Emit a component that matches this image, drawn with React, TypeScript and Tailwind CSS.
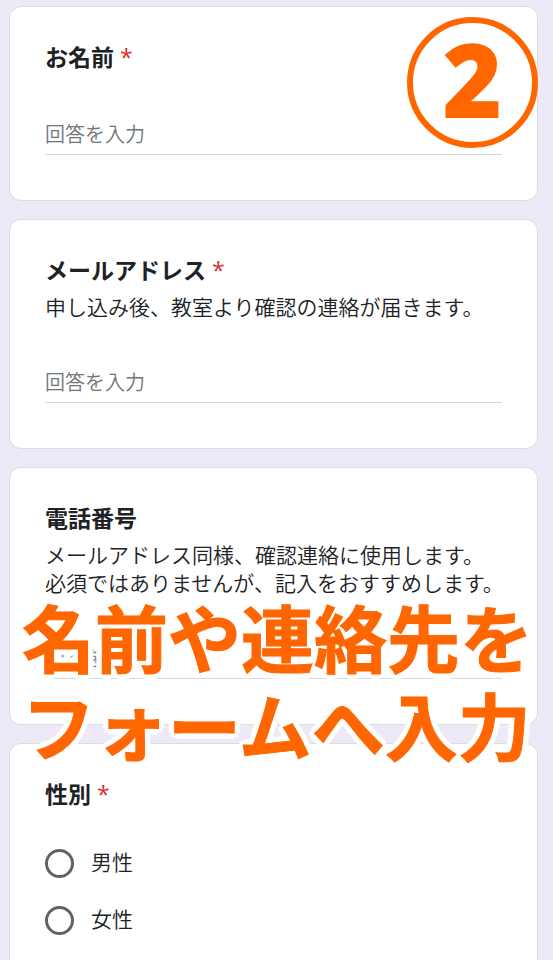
import { useId, useState } from "react";

type TextQuestionProps = {
  title: string;
  required?: boolean;
  description?: string[];
  type?: string;
};

const genders = ["男性", "女性"];

function RequiredMark() {
  return (
    <span className="ml-[6px] font-['Open_Sans',sans-serif] leading-none font-normal text-[#d93025]">*</span>
  );
}

function TextQuestion({ title, required, description, type = "text" }: TextQuestionProps) {
  const id = useId();

  return (
    <section className="rounded-xl border border-[#dadce0] bg-white px-[35px] pt-[35px] pb-[45px]">
      <label htmlFor={id} className="block text-[23px] leading-7 font-bold">
        {title}
        {required && <RequiredMark />}
      </label>
      {description && (
        <p className="mt-[9px] text-[21px] leading-7 font-[350] whitespace-nowrap">
          {description.map((line) => (
            <span key={line} className="block">
              {line}
            </span>
          ))}
        </p>
      )}
      <input
        id={id}
        type={type}
        required={required}
        placeholder="回答を入力"
        className={`block h-10 w-full border-b border-[#d5d7da] bg-transparent pb-[2px] text-[20px] font-[350] outline-none placeholder:text-[#70757a] ${
          description ? "mt-[43px]" : "mt-[45px]"
        }`}
      />
    </section>
  );
}

function GenderQuestion() {
  const [gender, setGender] = useState("");

  return (
    <fieldset className="grow rounded-t-xl border border-b-0 border-[#dadce0] bg-white px-[35px] pt-[35px]">
      <legend className="float-left w-full text-[23px] leading-7 font-bold">
        性別
        <RequiredMark />
      </legend>
      <div className="clear-both flex flex-col gap-7 pt-[42px]">
        {genders.map((option) => (
          <label key={option} className="flex h-[29px] items-start gap-[17px] text-[21px] leading-6 font-[350]">
            <input
              type="radio"
              name="gender"
              value={option}
              checked={gender === option}
              onChange={() => setGender(option)}
              className="size-[29px] shrink-0 appearance-none rounded-full border-3 border-[#5f6368] checked:border-8 checked:border-[#673ab7]"
            />
            {option}
          </label>
        ))}
      </div>
    </fieldset>
  );
}

export default function App() {
  return (
    <main
      lang="ja"
      className="relative min-h-screen overflow-hidden bg-[#ede9f7] font-['Noto_Sans_CJK_JP',sans-serif] text-[#202124]"
    >
      <form className="flex min-h-screen flex-col gap-[18px] pt-[6px] pr-[15px] pl-[9px]">
        <TextQuestion title="お名前" required />
        <TextQuestion
          title="メールアドレス"
          required
          type="email"
          description={["申し込み後、教室より確認の連絡が届きます。"]}
        />
        <TextQuestion
          title="電話番号"
          type="tel"
          description={["メールアドレス同様、確認連絡に使用します。", "必須ではありませんが、記入をおすすめします。"]}
        />
        <GenderQuestion />
      </form>

      {/* Step number */}
      <div className="pointer-events-none absolute top-[17px] right-[15px] flex size-[131px] items-center justify-center rounded-full border-6 border-[#ff6600] pb-2 font-['Open_Sans',sans-serif] text-[102px] leading-none font-extrabold text-[#ff6600]">
        2
      </div>

      {/* Caption over the form */}
      <p className="pointer-events-none absolute top-[591px] left-[22px] text-[73px] leading-[88px] font-bold whitespace-nowrap text-[#ff6600] [-webkit-text-stroke:1px_#ff6600] [text-shadow:6px_0_1px_#fff,-6px_0_1px_#fff,0_6px_1px_#fff,0_-6px_1px_#fff,4px_4px_1px_#fff,-4px_4px_1px_#fff,4px_-4px_1px_#fff,-4px_-4px_1px_#fff]">
        名前や連絡先を
        <br />
        フォームへ入力
      </p>
    </main>
  );
}
